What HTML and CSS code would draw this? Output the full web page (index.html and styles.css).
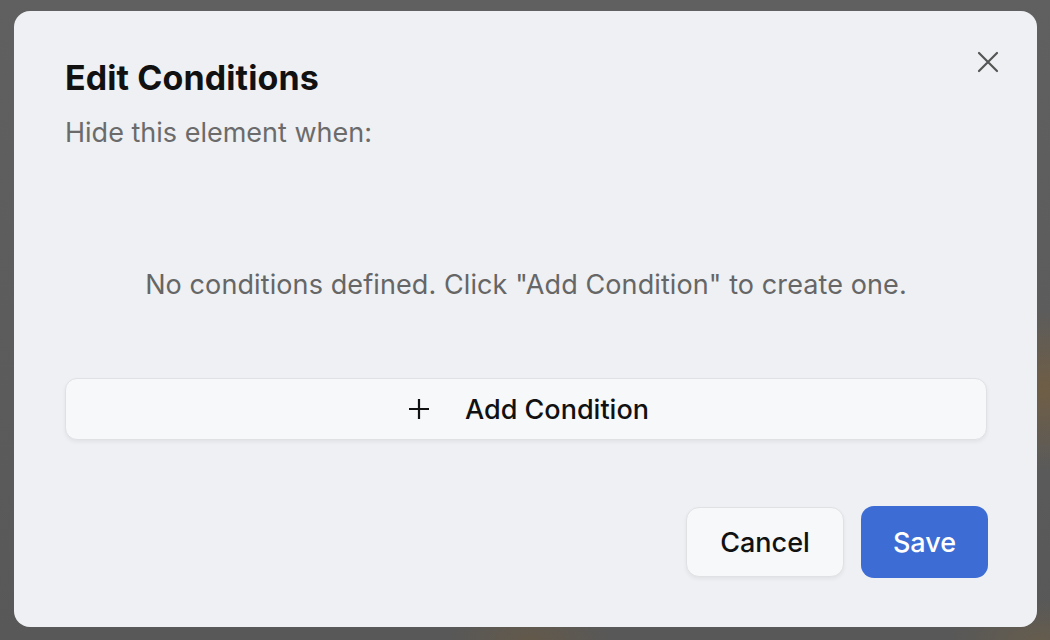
FILE: index.html
```html
<!DOCTYPE html>
<html lang="en">
<head>
<meta charset="utf-8">
<title>Edit Conditions</title>
<link rel="stylesheet" href="styles.css">
</head>
<body>
<div class="backdrop">
  <div class="dialog">
    <button class="close" aria-label="Close">
      <svg width="22" height="22" viewBox="0 0 22 22" fill="none" stroke="#555" stroke-width="2.2" stroke-linecap="round"><path d="M2 2L20 20M20 2L2 20"/></svg>
    </button>
    <h1 class="title">Edit Conditions</h1>
    <p class="subtitle">Hide this element when:</p>
    <p class="empty">No conditions defined. Click "Add Condition" to create one.</p>
    <button class="add">
      <svg width="20" height="20" viewBox="0 0 20 20" fill="none" stroke="#111" stroke-width="2.2"><path d="M10 0V20M0 10H20"/></svg>
      <span>Add Condition</span>
    </button>
    <div class="footer">
      <button class="btn cancel">Cancel</button>
      <button class="btn save">Save</button>
    </div>
  </div>
</div>
</body>
</html>
```
FILE: styles.css
```css
html, body {
  margin: 0;
  height: 100%;
}
body {
  font-family: Inter, "Noto Sans", sans-serif;
  background: #5e5e5e;
}
.backdrop {
  height: 640px;
  padding: 11px 13px 13px 14px;
  box-sizing: border-box;
  background:
    radial-gradient(ellipse 60px 80px at 1045px 390px, rgba(120,95,60,0.7), transparent),
    radial-gradient(ellipse 80px 40px at 530px 640px, rgba(110,90,60,0.5), transparent),
    radial-gradient(ellipse 90px 40px at 1040px 640px, rgba(110,95,70,0.6), transparent),
    linear-gradient(#606060, #585858);
}
.dialog {
  position: relative;
  height: 616px;
  background: #eef0f3;
  border-radius: 16px;
  padding: 47px 50px 0 51px;
  box-sizing: border-box;
  display: flex;
  flex-direction: column;
}
.close {
  position: absolute;
  top: 35px;
  right: 33px;
  width: 32px;
  height: 32px;
  padding: 0;
  border: 0;
  background: none;
  display: flex;
  align-items: center;
  justify-content: center;
}
.title {
  margin: 0;
  font-size: 34px;
  font-weight: 700;
  color: #111;
  line-height: 40px;
  letter-spacing: 0.1px;
}
.subtitle {
  margin: 18px 0 0;
  font-size: 27px;
  line-height: 34px;
  color: #6b6b6b;
}
.empty {
  margin: 118px 0 0;
  text-align: center;
  font-size: 27px;
  line-height: 34px;
  letter-spacing: 0.1px;
  color: #666;
}
.add {
  margin-top: 76px;
  height: 62px;
  border: 1px solid #dfe1e4;
  border-radius: 12px;
  background: #f6f8fa;
  box-shadow: 0 2px 4px rgba(0,0,0,0.06);
  display: flex;
  align-items: center;
  justify-content: center;
  gap: 36px;
  font-family: inherit;
  font-size: 27px;
  font-weight: 500;
  color: #111;
  padding: 0 0 0 6px;
}
.footer {
  margin-top: 66px;
  display: flex;
  justify-content: flex-end;
  align-items: center;
  gap: 17px;
}
.btn {
  border-radius: 13px;
  font-family: inherit;
  font-size: 27px;
  font-weight: 500;
  padding: 0;
}
.cancel {
  width: 158px;
  height: 70px;
  background: #f6f8fa;
  border: 1px solid #e0e1e3;
  box-shadow: 0 2px 4px rgba(0,0,0,0.06);
  color: #111;
}
.save {
  width: 127px;
  height: 72px;
  margin-right: -1px;
  background: #3d6cd4;
  border: 0;
  color: #fff;
}
```
